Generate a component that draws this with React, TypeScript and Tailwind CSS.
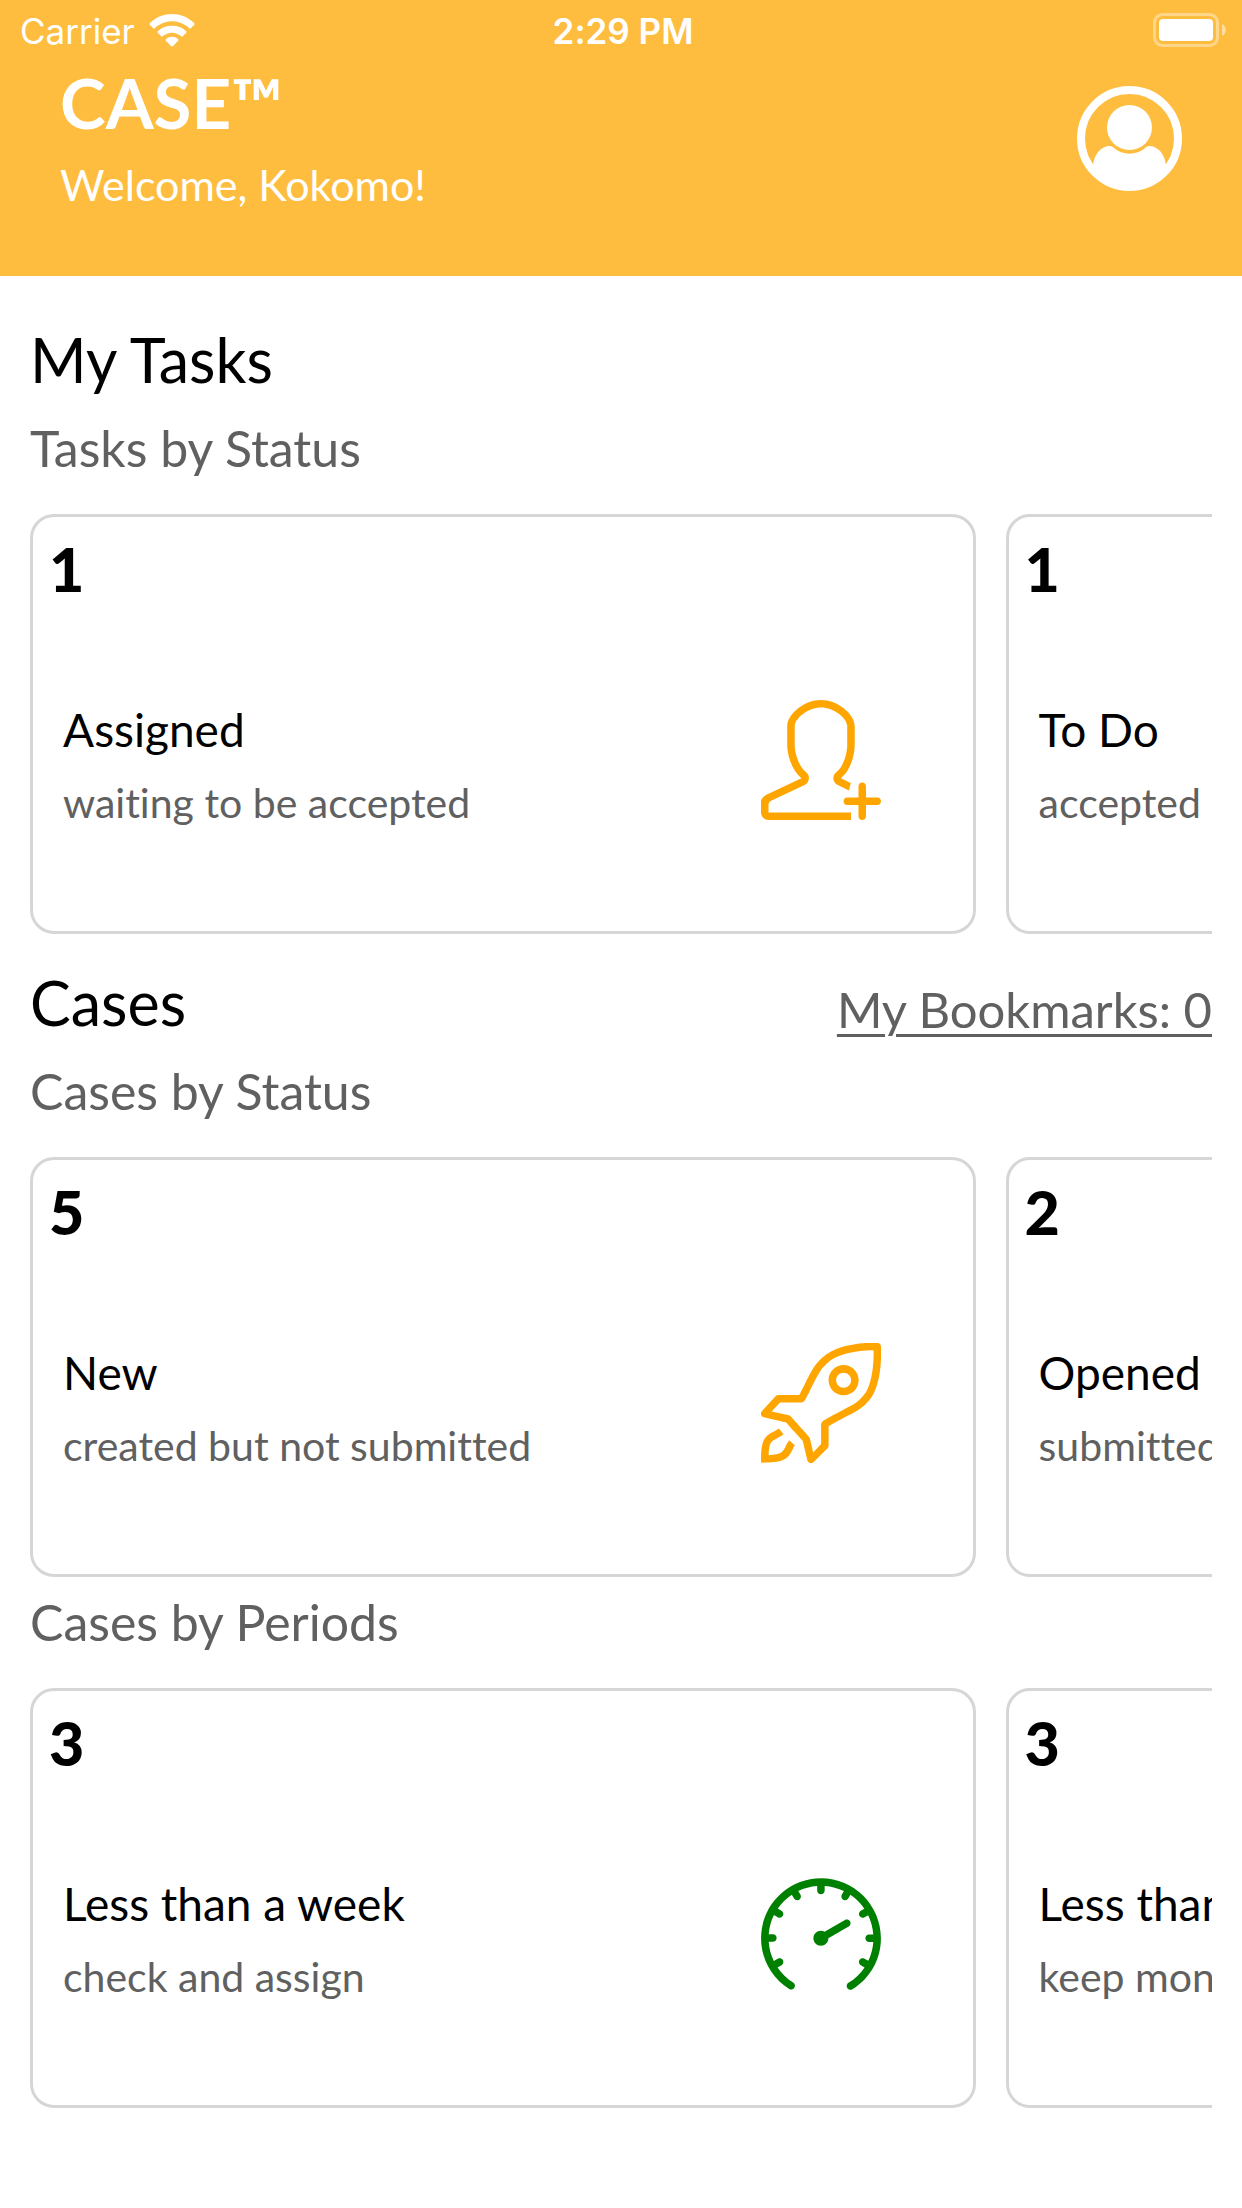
import type { ReactNode } from "react";
import { SlRocket, SlSpeedometer, SlUserFollow } from "react-icons/sl";

type Card = {
  count: number;
  title: string;
  note: string;
  icon: ReactNode;
};

const taskCards: Card[] = [
  { count: 1, title: "Assigned", note: "waiting to be accepted", icon: <SlUserFollow className="text-[#ffa500]" size={120} /> },
  { count: 1, title: "To Do", note: "accepted", icon: null }
];

const statusCards: Card[] = [
  { count: 5, title: "New", note: "created but not submitted", icon: <SlRocket className="text-[#ffa500]" size={120} /> },
  { count: 2, title: "Opened", note: "submitted", icon: null }
];

const periodCards: Card[] = [
  { count: 3, title: "Less than a week", note: "check and assign", icon: <SlSpeedometer className="text-[#008000]" size={120} /> },
  { count: 3, title: "Less than a month", note: "keep monitoring", icon: null }
];

export default function App() {
  return (
    <div className="min-h-screen bg-white font-['Lato',sans-serif] text-black [font-variant-ligatures:none]">
      <header className="bg-[#ffbd3f] pb-[59px] text-white">
        <StatusBar />
        <div className="flex items-center justify-between px-[60px]">
          <div>
            <h1 className="text-[69px] leading-[86px] font-bold">CASE™</h1>
            <p className="mt-[7px] text-[43px] leading-[64px]">Welcome, Kokomo!</p>
          </div>
          <button aria-label="Profile" type="button">
            <ProfileIcon />
          </button>
        </div>
      </header>

      <main className="px-[30px] pt-[44px]">
        <section>
          <h2 className="mb-[3px] text-[61px] leading-[80px]">My Tasks</h2>
          <CardRow cards={taskCards} title="Tasks by Status" />
        </section>
        <section className="pt-[29px]">
          <div className="flex items-end justify-between">
            <h2 className="mb-[3px] text-[61px] leading-[80px]">Cases</h2>
            <a className="text-[49px] leading-[74px] text-[#606060] underline decoration-3 underline-offset-6" href="#bookmarks">
              My Bookmarks: 0
            </a>
          </div>
          <CardRow cards={statusCards} title="Cases by Status" />
          <CardRow cards={periodCards} title="Cases by Periods" />
        </section>
      </main>
    </div>
  );
}

function StatusBar() {
  return (
    <div className="grid h-[60px] grid-cols-3 items-center pr-[16px] pl-[20px] font-['Inter',sans-serif] text-[35px] leading-[40px]">
      <div className="flex items-center gap-[14px]">
        <span className="pt-[2px]">Carrier</span>
        <WifiIcon />
      </div>
      <span className="pt-[2px] text-center font-semibold">2:29 PM</span>
      <div className="flex justify-end">
        <BatteryIcon />
      </div>
    </div>
  );
}

function CardRow({ cards, title }: { cards: Card[]; title: string }) {
  return (
    <div>
      <h3 className="pt-[10px] pb-[31px] text-[50px] leading-[70px] text-[#606060]">{title}</h3>
      <div className="flex gap-[30px] overflow-hidden">
        {cards.map((card, index) => (
          <CountCard card={card} key={index} />
        ))}
      </div>
    </div>
  );
}

function CountCard({ card }: { card: Card }) {
  return (
    <article className="w-4/5 shrink-0 rounded-3xl border-3 border-[#d6d6d6] pt-[14px] pb-[90px]">
      <p className="px-[16px] text-[61px] leading-[76px] font-black">{card.count}</p>
      <div className="flex items-start justify-between pt-[88px] pr-[92px] pl-[30px]">
        <div>
          <h4 className="text-[46px] leading-[70px] whitespace-nowrap">{card.title}</h4>
          <p className="text-[41px] leading-[76px] whitespace-nowrap text-[#606060]">{card.note}</p>
        </div>
        <div className="pt-[5px]">{card.icon}</div>
      </div>
    </article>
  );
}

function ProfileIcon() {
  return (
    <svg fill="none" height="105" viewBox="0 0 105 105" width="105">
      <circle cx="52.5" cy="52.5" r="48.5" stroke="currentColor" strokeWidth="8" />
      <circle cx="52.5" cy="41.5" fill="currentColor" r="22.5" />
      <path
        d="M16 80C17 68 24 60 33 60Q35 60 37 62C45 69.500 60 69.500 68 62Q70 60 72 60C81 60 88 68 89 80A46 46 0 0 1 52.500 101A46 46 0 0 1 16 80Z"
        fill="currentColor"
      />
    </svg>
  );
}

function WifiIcon() {
  return (
    <svg fill="currentColor" height="33" viewBox="0 0 46 33" width="46">
      <path d="M.8 9.200C13-3 33-3 45.200 9.200Q46 10 45.200 10.800L41.800 14.200Q41 15 40.200 14.200C30.500 5 15.500 5 5.800 14.200Q5 15 4.200 14.200L.8 10.800Q0 10 .8 9.200Z" />
      <path d="M8.800 17.200C16.500 10 29.500 10 37.200 17.200Q38 18 37.200 18.800L33.800 22.200Q33 23 32.200 22.200C27 17.500 19 17.500 13.800 22.200Q13 23 12.200 22.200L8.800 18.800Q8 18 8.800 17.200Z" />
      <path d="M16.800 25.200C20.500 22 25.500 22 29.200 25.200Q30 26 29.200 26.800L23.800 32.200Q23 33 22.200 32.200L16.800 26.800Q16 26 16.800 25.200Z" />
    </svg>
  );
}

function BatteryIcon() {
  return (
    <svg fill="none" height="34" viewBox="0 0 73 34" width="73">
      <rect height="31" rx="8" stroke="currentColor" strokeOpacity="0.4" strokeWidth="3" width="63" x="1.5" y="1.5" />
      <rect fill="currentColor" height="22" rx="4" width="54" x="6" y="6" />
      <path d="M69 11C74 13 74 21 69 23Z" fill="currentColor" fillOpacity="0.5" />
    </svg>
  );
}
